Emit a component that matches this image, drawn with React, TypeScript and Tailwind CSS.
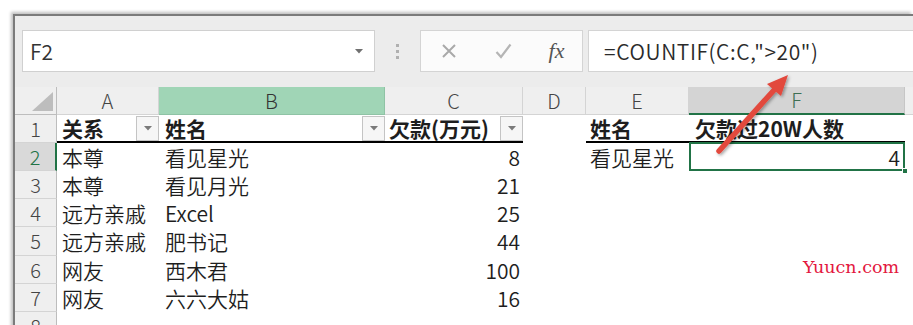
import React from "react";

const FONT = "font-['Noto_Sans_CJK_SC','Noto_Sans',sans-serif]";

type Row = {
  n: number;
  h: string;
  a?: string;
  b?: string;
  c?: string;
  e?: string;
  f?: string;
};

const rows: Row[] = [
  { n: 2, h: "h-[28px]", a: "本尊", b: "看见星光", c: "8", e: "看见星光", f: "4" },
  { n: 3, h: "h-[28px]", a: "本尊", b: "看见月光", c: "21" },
  { n: 4, h: "h-[28px]", a: "远方亲戚", b: "Excel", c: "25" },
  { n: 5, h: "h-[29px]", a: "远方亲戚", b: "肥书记", c: "44" },
  { n: 6, h: "h-[28px]", a: "网友", b: "西木君", c: "100" },
  { n: 7, h: "h-[28px]", a: "网友", b: "六六大姑", c: "16" },
  { n: 8, h: "h-[28px]" },
];

function FilterBtn() {
  return (
    <div className="w-[23px] h-[25px] border border-[#c4c4c4] bg-[#f6f6f6] flex items-center justify-center shrink-0">
      <svg width="8" height="5" viewBox="0 0 8 5">
        <polygon points="0,0 8,0 4,4.5" fill="#7a7a7a" />
      </svg>
    </div>
  );
}

export default function App() {
  return (
    <div className={`w-[913px] h-[325px] bg-white overflow-hidden relative ${FONT}`}>
      <div className="ml-[13px] mt-[14px] h-[320px] border-l-2 border-t-2 border-[#7b7b7b] bg-[#ececec] flex flex-col shadow-[-2px_-2px_3px_rgba(0,0,0,0.25)]">
        {/* Formula bar */}
        <div className="h-[71px] flex items-start pt-[14px] pl-[7px] shrink-0">
          <div className="w-[353px] h-[42px] border border-[#d0d0d0] bg-white flex items-center justify-between pl-[7px] pr-[11px]">
            <span className="text-[21px] font-[350] text-[#333] leading-none">F2</span>
            <svg width="8" height="5" viewBox="0 0 8 5">
              <polygon points="0,0 8,0 4,4.5" fill="#707070" />
            </svg>
          </div>
          <div className="w-[45px] h-[42px] flex flex-col items-center justify-center gap-[3px]">
            <div className="w-[3px] h-[3px] bg-[#b0b0b0]" />
            <div className="w-[3px] h-[3px] bg-[#b0b0b0]" />
            <div className="w-[3px] h-[3px] bg-[#b0b0b0]" />
          </div>
          <div className="w-[163px] h-[42px] border border-[#d4d4d4] bg-[#fbfbfb] flex items-center">
            <div className="w-[55px] flex justify-center">
              <svg width="16" height="16" viewBox="0 0 16 16">
                <path d="M2 2 L14 14 M14 2 L2 14" stroke="#a9a9a9" strokeWidth="2" />
              </svg>
            </div>
            <div className="w-[55px] flex justify-center">
              <svg width="17" height="16" viewBox="0 0 17 16">
                <path d="M1.5 9 L6 14 L15.5 1.5" stroke="#b5b5b5" strokeWidth="2.2" fill="none" />
              </svg>
            </div>
            <div className="flex-1 flex justify-center">
              <span className="font-['Liberation_Serif',serif] italic text-[22px] text-[#555] leading-none">fx</span>
            </div>
          </div>
          <div className="ml-[5px] flex-1 h-[42px] border border-r-0 border-[#d4d4d4] bg-white flex items-center pl-[15px]">
            <span className="text-[21px] font-[350] text-[#2a2a2a] leading-none tracking-[0.6px]">=COUNTIF(C:C,"&gt;20")</span>
          </div>
        </div>

        {/* Column headers */}
        <div className="h-[28px] flex shrink-0 text-[20px] font-light text-[#444] leading-none">
          <div className="w-[42px] h-full border-r border-b border-[#bdbdbd] flex items-end justify-end pr-[3px] pb-[3px] bg-[#efefef]">
            <svg width="21" height="19" viewBox="0 0 21 19">
              <polygon points="21,0 21,19 0,19" fill="#bdbdbd" />
            </svg>
          </div>
          <div className="w-[102px] h-full border-r border-b border-[#d4d4d4] bg-[#efefef] flex items-center justify-center">A</div>
          <div className="w-[226px] h-full border-r border-b border-[#8fc3a5] bg-[#a0d5b6] flex items-center justify-center text-[#333]">B</div>
          <div className="w-[138px] h-full border-r border-b border-[#d4d4d4] bg-[#efefef] flex items-center justify-center">C</div>
          <div className="w-[63px] h-full border-r border-b border-[#d4d4d4] bg-[#efefef] flex items-center justify-center">D</div>
          <div className="w-[103px] h-full border-r border-b border-[#d4d4d4] bg-[#efefef] flex items-center justify-center">E</div>
          <div className="w-[216px] h-full border-r border-[#c6c6c6] border-b-2 border-b-[#217346] bg-[#d4d4d4] flex items-center justify-center text-[#3d6f53]">F</div>
          <div className="flex-1 h-full border-b border-[#d4d4d4] bg-[#efefef]" />
        </div>

        {/* Row 1 (table headers) */}
        <div className="h-[28px] flex shrink-0 bg-white text-[21px] font-bold text-[#1e1e1e] leading-none">
          <div className="w-[42px] h-full border-r border-b border-r-[#bdbdbd] border-b-[#d4d4d4] bg-[#efefef] flex items-center justify-center text-[20px] font-light text-[#444]">1</div>
          <div className="w-[102px] h-full border-b-2 border-black flex items-center justify-between pl-[5px]">
            <span>关系</span>
            <FilterBtn />
          </div>
          <div className="w-[226px] h-full border-b-2 border-black flex items-center justify-between pl-[6px]">
            <span>姓名</span>
            <FilterBtn />
          </div>
          <div className="w-[138px] h-full border-b-2 border-black flex items-center justify-between pl-[4px]">
            <span>欠款(万元)</span>
            <FilterBtn />
          </div>
          <div className="w-[63px] h-full" />
          <div className="w-[103px] h-full border-b-2 border-black flex items-center pl-[4px]">姓名</div>
          <div className="w-[216px] h-full border-b-2 border-black flex items-center pl-[6px]">欠款过20W人数</div>
          <div className="flex-1 h-full" />
        </div>

        {/* Data rows */}
        {rows.map((r) => {
          const sel = r.n === 2;
          return (
            <div key={r.n} className={`${r.h} flex shrink-0 bg-white text-[21px] font-[350] text-[#1e1e1e] leading-none`}>
              <div
                className={`w-[42px] h-full border-b border-b-[#d4d4d4] flex items-center justify-center text-[20px] font-light ${
                  sel
                    ? "bg-[#d9d9d9] text-[#217346] border-r-2 border-r-[#217346]"
                    : "bg-[#efefef] text-[#444] border-r border-r-[#bdbdbd]"
                }`}
              >
                {r.n}
              </div>
              <div className="w-[102px] h-full flex items-center pl-[5px] whitespace-nowrap">{r.a}</div>
              <div className="w-[226px] h-full flex items-center pl-[6px] whitespace-nowrap">{r.b}</div>
              <div className="w-[138px] h-full flex items-center justify-end pr-[3px]">{r.c}</div>
              <div className="w-[63px] h-full" />
              <div className="w-[103px] h-full flex items-center pl-[4px] whitespace-nowrap">{r.e}</div>
              <div className="w-[216px] h-full flex items-center justify-end pr-[5px] relative">
                {r.f}
                {sel && (
                  <>
                    <div className="absolute left-0 right-0 top-[-1px] bottom-0 border-2 border-[#217346]" />
                    <div className="absolute right-[-3px] bottom-[-3px] w-[6px] h-[6px] bg-[#217346] border border-white" />
                  </>
                )}
              </div>
              <div className="flex-1 h-full" />
            </div>
          );
        })}
      </div>

      {/* Red arrow annotation */}
      <svg className="absolute inset-0 pointer-events-none" width="913" height="325" viewBox="0 0 913 325">
        <defs>
          <filter id="sh" x="-20%" y="-20%" width="140%" height="140%">
            <feDropShadow dx="1.5" dy="1.5" stdDeviation="1.5" floodColor="#000" floodOpacity="0.35" />
          </filter>
        </defs>
        <g filter="url(#sh)">
          <line x1="719" y1="151" x2="775" y2="89" stroke="#e2483d" strokeWidth="5.5" strokeLinecap="round" />
          <polygon points="788,75 781,96 767,84" fill="#e2483d" />
        </g>
      </svg>

      {/* Watermark */}
      <div className="absolute left-[803px] top-[259px] font-['DejaVu_Serif',serif] text-[17.5px] text-[#e3173e] leading-none">
        Yuucn.com
      </div>
    </div>
  );
}
